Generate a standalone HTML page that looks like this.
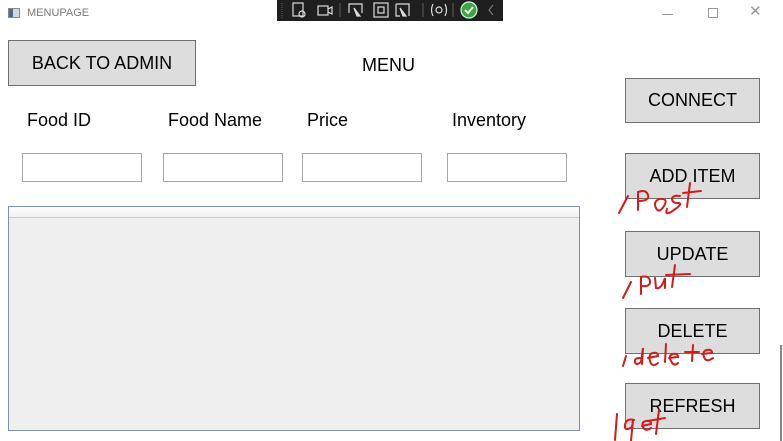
<!DOCTYPE html>
<html><head><meta charset="utf-8"><style>
*{margin:0;padding:0;box-sizing:border-box}
body{width:783px;height:441px;background:#fff;position:relative;overflow:hidden;font-family:"Liberation Sans",sans-serif;color:#000}
.a{position:absolute}
.btn{position:absolute;background:#dddddd;border:1px solid #707070;font-size:18px;display:flex;align-items:center;justify-content:center}
.lbl{position:absolute;font-size:18px}
.in{position:absolute;background:#fff;border:1px solid #a8a8a8;height:29px;width:120px;top:153px}
.tb{position:absolute;top:0;left:277px;width:226px;height:21px;background:#1f1f1f}
</style></head><body>
<div class="a" style="left:8px;top:8px;width:12px;height:10px;border:1px solid #8a8a8a;background:linear-gradient(90deg,#4a6a8a 40%,#d0d8e0 40%)"></div>
<div class="a" style="left:27px;top:7px;font-size:11px;color:#7a7a7a">MENUPAGE</div>
<div class="a" style="left:662px;top:14px;width:11px;height:1px;background:#999"></div>
<div class="a" style="left:708px;top:8px;width:10px;height:10px;border:1px solid #999"></div>
<div class="a" style="left:749px;top:2px;font-size:15px;color:#999">✕</div>
<div class="tb">
<svg width="226" height="21" viewBox="0 0 226 21" fill="none" stroke="#ddd" stroke-width="1.2">
<path d="M5 3v15" stroke="#555" stroke-dasharray="1 1"/>
<rect x="16" y="3" width="10" height="13"/><circle cx="25" cy="14" r="3"/>
<rect x="41" y="6" width="10" height="9"/><path d="M51 9l4-2v7l-4-2"/>
<path d="M63 3v14" stroke="#555"/>
<path d="M72 13V4h13v9" /><path d="M77 8l6 8-3 0z" fill="#ddd"/>
<rect x="97" y="3" width="14" height="14"/><rect x="101" y="7" width="6" height="6"/>
<path d="M119 4h13v12M119 4v12h4"/><path d="M123 8l6 8-3 0z" fill="#ddd"/>
<path d="M146 3v14" stroke="#555"/>
<path d="M156 4q-3 6 0 12M168 4q3 6 0 12"/><circle cx="162" cy="10" r="3"/>
<path d="M176 3v14" stroke="#555"/>
<circle cx="192" cy="10" r="8" fill="#3fa53f" stroke="#cfe"/><path d="M188 10l3 3 5-6" stroke="#fff" stroke-width="1.8"/>
<path d="M216 5l-4 5 4 5" stroke="#777"/>
</svg></div>

<div class="btn" style="left:8px;top:40px;width:188px;height:46px">BACK TO ADMIN</div>
<div class="lbl" style="left:362px;top:55px">MENU</div>
<div class="lbl" style="left:27px;top:110px">Food ID</div>
<div class="lbl" style="left:168px;top:110px">Food Name</div>
<div class="lbl" style="left:307px;top:110px">Price</div>
<div class="lbl" style="left:452px;top:110px">Inventory</div>
<div class="in" style="left:22px"></div>
<div class="in" style="left:163px"></div>
<div class="in" style="left:302px"></div>
<div class="in" style="left:447px"></div>

<div class="a" style="left:8px;top:206px;width:572px;height:225px;border:1px solid #7f93a8;background:#efefef">
<div style="height:11px;background:linear-gradient(#fdfdfd,#f1f1f3);border-bottom:1px solid #c8ccd2"></div></div>

<div class="btn" style="left:625px;top:78px;width:135px;height:45px">CONNECT</div>
<div class="btn" style="left:625px;top:153px;width:135px;height:46px">ADD ITEM</div>
<div class="btn" style="left:625px;top:231px;width:135px;height:46px">UPDATE</div>
<div class="btn" style="left:625px;top:308px;width:135px;height:46px">DELETE</div>
<div class="btn" style="left:625px;top:383px;width:135px;height:46px">REFRESH</div>
<div class="a" style="left:780px;top:345px;width:2px;height:96px;background:#888"></div>

<svg class="a" style="left:0;top:0" width="783" height="441" fill="none" stroke="#d21b1b" stroke-width="2" stroke-linecap="round">
<path d="M628 196l-9 17"/>
<path d="M638 210l0-18q8-3 10 3t-10 6"/>
<path d="M659 199q-6 3-3 9t8-2-5-7"/>
<path d="M680 196q-8-1-8 3t6 4-4 7-7-1"/>
<path d="M690 183l-3 24M683 193l18-2"/>
<path d="M631 282l-8 16"/>
<path d="M641 294l0-17q8-2 9 4t-9 5"/>
<path d="M655 278l1 10q5 2 9-10l0 10"/>
<path d="M675 265l-3 22M666 275l24-1"/>
<path d="M626 356l-3 10"/>
<path d="M640 358q-6 0-5 4t6 0l2-14 -1 16"/>
<path d="M648 358l10-2q0-4-5-3t-3 8 8 2"/>
<path d="M666 344l-1 18"/>
<path d="M669 358l9-1q0-4-5-3t-2 7 7 2"/>
<path d="M693 345l-1 16M685 352l14 0"/>
<path d="M702 354l10-1q0-4-5-3t-3 7 9 1"/>
<path d="M617 414l-2 26"/>
<path d="M634 420q-8-2-9 5t7 2l1-7 -2 21"/>
<path d="M642 426l9-2q0-4-5-3t-3 6 8 1"/>
<path d="M659 410l-3 24M648 421l17-3"/>
</svg>
</body></html>
